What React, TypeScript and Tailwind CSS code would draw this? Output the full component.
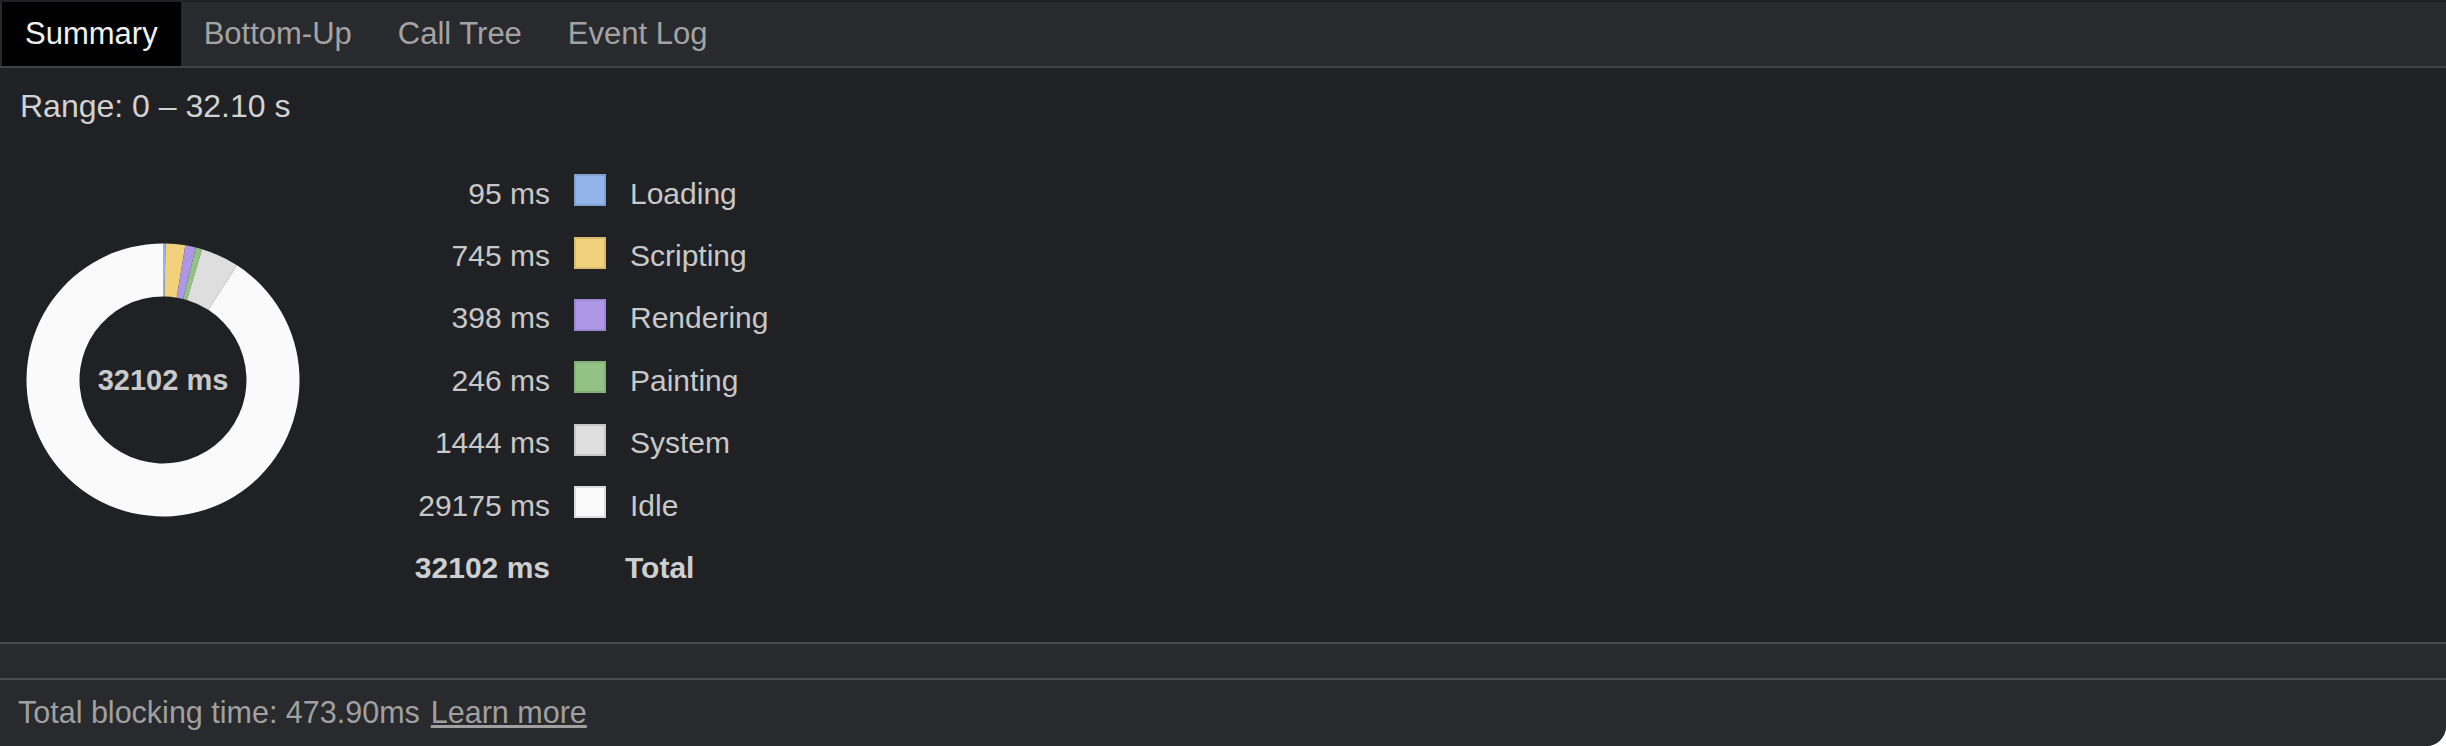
import React from 'react';

const slices = [
    { label: 'Loading', ms: 95, fill: '#8fb5e9', edge: '#7fa1d2' },
    { label: 'Scripting', ms: 745, fill: '#f2d17c', edge: '#d9bb6f' },
    { label: 'Rendering', ms: 398, fill: '#af97e8', edge: '#9c87d0' },
    { label: 'Painting', ms: 246, fill: '#93c384', edge: '#84af76' },
    { label: 'System', ms: 1444, fill: '#dedede', edge: '#c6c6c6' },
    { label: 'Idle', ms: 29175, fill: '#fafafa', edge: '#dcdcdc' },
];

// displayed total (the parts are rounded, so they don't add up exactly)
const TOTAL_MS = 32102;
const sum = slices.reduce((s, x) => s + x.ms, 0);

function Donut() {
    const c = 137;
    const R = 136.5;
    const r = 83.5;
    const pt = (rad: number, a: number) => [c + rad * Math.sin(a), c - rad * Math.cos(a)];

    let acc = 0;
    const paths = slices.map((s) => {
        const a0 = (acc / sum) * Math.PI * 2;
        acc += s.ms;
        const a1 = (acc / sum) * Math.PI * 2;
        const large = a1 - a0 > Math.PI ? 1 : 0;
        const [x0, y0] = pt(R, a0);
        const [x1, y1] = pt(R, a1);
        const [x2, y2] = pt(r, a1);
        const [x3, y3] = pt(r, a0);
        const d = `M${x0} ${y0} A${R} ${R} 0 ${large} 1 ${x1} ${y1} L${x2} ${y2} A${r} ${r} 0 ${large} 0 ${x3} ${y3} Z`;
        return <path key={s.label} d={d} fill={s.fill} />;
    });

    return (
        <div className="relative w-[274px] h-[274px] shrink-0">
            <svg width="274" height="274" viewBox="0 0 274 274">
                {paths}
            </svg>
            <div className="absolute inset-0 flex items-center justify-center text-[29px] font-bold text-[#c9c9c9]">
                {TOTAL_MS} ms
            </div>
        </div>
    );
}

export default function App() {
    const tabs = ['Summary', 'Bottom-Up', 'Call Tree', 'Event Log'];

    return (
        <div className="w-[2446px] h-[746px] bg-white" style={{ fontFamily: '"Liberation Sans", Arial, sans-serif' }}>
            <div className="w-full h-full flex flex-col bg-[#202124] rounded-br-[20px] overflow-hidden">

                {/* Tabs */}
                <div className="h-[68px] shrink-0 bg-[#292a2d] border-t-2 border-t-[#202124] border-b-2 border-b-[#3f4043] flex pl-[2px]">
                    {tabs.map((t, i) => (
                        <div
                            key={t}
                            className={
                                i === 0
                                    ? 'h-full px-[23px] flex items-center text-[31px] bg-black text-[#f1f1f1]'
                                    : 'h-full px-[23px] flex items-center text-[31px] text-[#a3a3a3]'
                            }
                        >
                            {t}
                        </div>
                    ))}
                </div>

                {/* Summary body */}
                <div className="flex-1 pl-[20px] pt-[20px]">
                    <div className="text-[32px] leading-[36px] text-[#d2d2d2]">Range: 0 – 32.10 s</div>

                    <div className="mt-[38px] flex items-center">
                        <div className="ml-[6px]">
                            <Donut />
                        </div>

                        <div className="ml-[100px] grid grid-cols-[150px_32px_auto] gap-x-[24px] text-[30px] text-[#c8c8c8]">
                            {slices.map((s) => (
                                <React.Fragment key={s.label}>
                                    <div className="h-[62.4px] flex items-center justify-end">{s.ms} ms</div>
                                    <div className="h-[62.4px] flex items-center">
                                        <div
                                            className="w-[32px] h-[32px] -translate-y-[3px] border-2"
                                            style={{ backgroundColor: s.fill, borderColor: s.edge }}
                                        />
                                    </div>
                                    <div className="h-[62.4px] flex items-center">{s.label}</div>
                                </React.Fragment>
                            ))}
                            <div className="h-[62.4px] flex items-center justify-end font-bold text-[#cfcfcf]">{TOTAL_MS} ms</div>
                            <div className="h-[62.4px]" />
                            <div className="h-[62.4px] flex items-center -ml-[5px] font-bold text-[#cfcfcf]">Total</div>
                        </div>
                    </div>
                </div>

                {/* Bottom strip */}
                <div className="h-[38px] shrink-0 bg-[#292a2d] border-t-2 border-b-2 border-[#4a4b4e]" />

                {/* Footer */}
                <div className="h-[66px] shrink-0 bg-[#292a2d] flex items-center px-[18px] text-[30.5px] text-[#a0a0a0]">
                    <span>Total blocking time: 473.90ms</span>
                    <span className="ml-[11px] underline">Learn more</span>
                </div>
            </div>
        </div>
    );
}
